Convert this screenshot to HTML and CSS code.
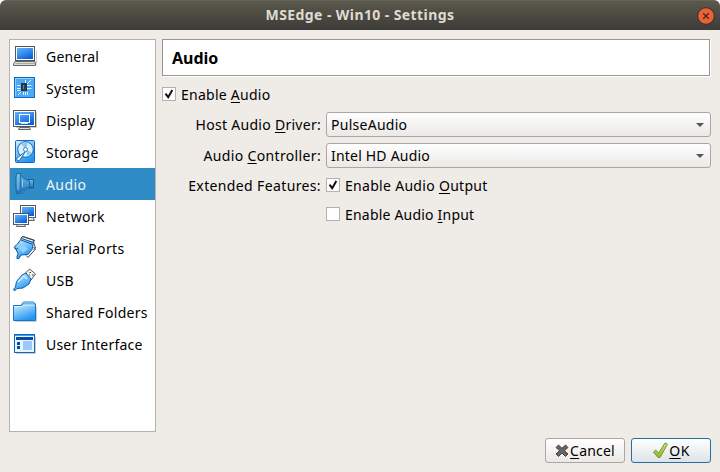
FILE: index.html
```html
<!DOCTYPE html>
<html lang="en">
<head>
<meta charset="utf-8">
<title>MSEdge - Win10 - Settings</title>
<link rel="stylesheet" href="styles.css">
</head>
<body>
<svg class="defs" width="0" height="0" aria-hidden="true">
  <defs>
    <linearGradient id="screen" x1="0" y1="0" x2=".6" y2="1"><stop offset="0" stop-color="#5bb4fb"/><stop offset=".45" stop-color="#3f94f0"/><stop offset="1" stop-color="#0a63dd"/></linearGradient>
    <linearGradient id="pale" x1="0" y1="0" x2=".5" y2="1"><stop offset="0" stop-color="#d5f1ff"/><stop offset="1" stop-color="#2396f2"/></linearGradient>
    <linearGradient id="cone" x1="0" y1="0" x2="0" y2="1"><stop offset="0" stop-color="#75bce8"/><stop offset="1" stop-color="#2174b8"/></linearGradient>
    <linearGradient id="tick" x1="0" y1="0" x2="0" y2="1"><stop offset="0" stop-color="#d2e56b"/><stop offset="1" stop-color="#8cb62b"/></linearGradient>
  </defs>
</svg>
<div class="window">
  <header class="titlebar">
    <span class="title">MSEdge - Win10 - Settings</span>
    <button class="close" aria-label="Close"><svg width="18" height="18"><circle cx="9" cy="9" r="8.3"/><path d="M6.2 6.2l5.6 5.6M11.8 6.2l-5.6 5.6"/></svg></button>
  </header>
  <main class="body">
    <nav class="list">
      <a class="item"><svg class="icon" viewBox="0 0 24 24"><path d="M3 20.5h20.500v-14" fill="none" stroke="#ccc"/><rect x="2.500" y="2.500" width="19" height="14" fill="#fff" stroke="#555"/><rect x="4" y="4" width="16" height="11" fill="url(#screen)"/><path d="M2 17.500h20l.5 2v2H.5v-2z" fill="#deded8" stroke="#666"/><path d="M2 19.500h20" stroke="#aaa"/></svg><span class="w-general">General</span></a>
      <a class="item"><svg class="icon" viewBox="0 0 24 24"><rect x="1.500" y="1.500" width="20" height="20" fill="#4ba9f6" stroke="#1168c4"/><path d="M2.500 20.500v-18h18" fill="none" stroke="#8dcdff"/><path d="M4 9.500h3.500M4 12.500h3.500M4 14.500h3.500M14 9.500h4.500M14 12.500h4.500M12.500 4v3M5 19l3-3M14 8l4-4M10.500 16v3M12.500 16v3M14.500 16v3" stroke="#e2f5ff" fill="none"/><rect x="8.500" y="7.500" width="5" height="7" fill="#333c42" stroke="#18394f"/><path d="M10.500 9v4" stroke="#777"/></svg><span class="w-system">System</span></a>
      <a class="item"><svg class="icon" viewBox="0 0 24 24"><path d="M3 19.500h20.500v-15" fill="none" stroke="#ccc"/><rect x=".5" y="2.500" width="22" height="16" fill="#fff" stroke="#555"/><rect x="2" y="4" width="19" height="13" fill="url(#screen)"/><rect x="6.500" y="6.500" width="10" height="8" fill="none" stroke="#fff"/><path d="M8 15.500h7" stroke="#cbe5ff"/><path d="M5.500 21.500l1-2h10l1 2z" fill="#ddd" stroke="#666"/></svg><span class="w-general">Display</span></a>
      <a class="item"><svg class="icon" viewBox="0 0 24 24"><rect x="2.500" y=".5" width="19" height="22" rx="1" fill="url(#pale)" stroke="#1168c4"/><circle cx="12.500" cy="9.500" r="7.800" fill="#d8eefb" stroke="#0d60b5"/><path d="M12.500 9.500L8 3.500a7 7 0 0 1 7-1z M12.500 9.500l6 3a7 7 0 0 1-4 3.500z" fill="#8ec8ee"/><circle cx="12.500" cy="9.500" r="2" fill="#fff" stroke="#3382c4"/><path d="M12 12L6.500 20.500c-2 .8-3.500-.7-2.500-2.500z" fill="#fff" stroke="#1168b8"/></svg><span class="w-general">Storage</span></a>
      <a class="item selected"><svg class="icon" viewBox="0 0 24 24"><path d="M9 21.500l4-3.500 4-1.500h4.500" stroke="#2875ac" fill="none"/><path d="M15 7.500h5.500v8H15z" fill="url(#cone)" stroke="#145e9e"/><path d="M3.500 1.500h4c.4 3 3 5.500 9 7.500v6c-6 1.500-8.600 3.500-9 6.500h-4c-1-6-1-14 0-20z" fill="url(#cone)" stroke="#1769ac"/><path d="M7.500 2v19" stroke="#2475b6"/><path d="M5 3v15M9.500 8v7" stroke="#8bc7ea" fill="none"/></svg><span class="w-audio">Audio</span></a>
      <a class="item"><svg class="icon" viewBox="0 0 24 24"><rect x="7.500" y="1.500" width="15" height="12" fill="#fff" stroke="#555"/><rect x="9" y="3" width="12" height="9" fill="url(#screen)"/><path d="M14 16.500h7.500l-1.500-3" fill="#ddd" stroke="#666"/><rect x=".5" y="9.500" width="15" height="11" fill="#fff" stroke="#555"/><rect x="2" y="11" width="12" height="8" fill="url(#screen)"/><path d="M3.500 22.500l1-2h7l1 2z" fill="#ddd" stroke="#666"/></svg><span class="w-system">Network</span></a>
      <a class="item"><svg class="icon" viewBox="0 0 24 24"><path d="M8 2l2-1.500 11 3.500-.5 2 2 6-2 1.500" fill="#eee" stroke="#555"/><path d="M1.500 10.500l3-2.500 4-5.500 12 4-1.500 7-4 5-7 .5-2 3.500h-2v-2l1-3z" fill="url(#pale)" stroke="#0b5aa7"/><path d="M7.500 2.500l2-2 12 4-1.500 2M1 11.500l2 2 2-1.500M13 19.500l2 2 7.500-8.500-2-2" stroke="#444" fill="none"/><path d="M8 4l11 4" stroke="#0b5aa7" fill="none"/><path d="M6 12l4-4 5 5-5 4z" fill="#8bd2ff"/></svg><span class="w-serial">Serial Ports</span></a>
      <a class="item"><svg class="icon" viewBox="0 0 24 24"><path d="M12 5.500l4.500-4.500 6 5-4.500 6z" fill="#f4f4f4" stroke="#555"/><path d="M16.500 4.500h1.500M19 7h1.500M16 7h1" stroke="#333"/><path d="M3.500 13.500L9 7l4-2 5 6-2 5-6 4-6 .5L1.500 23l-1-1.500 2-2.500z" fill="url(#pale)" stroke="#0c5fab"/><path d="M5 14l6-6 3 3" stroke="#c8eeff" fill="none" stroke-width="1.500"/></svg><span class="w-usb">USB</span></a>
      <a class="item"><svg class="icon" viewBox="0 0 24 24"><path d="M8.500 4.500l2-2.500h10l2 2.500v15H8.500z" fill="#d9f2ff" stroke="#1682d3"/><path d="M.5 5.500h8l2-1.500h12v16.500H.5z" fill="url(#pale)" stroke="#1477cb"/><path d="M1.500 6.500h7l2-1.500h11" stroke="#e0f6ff" fill="none"/><path d="M2 21.500h21.500V7" stroke="#ccc" fill="none"/></svg><span class="w-shared">Shared Folders</span></a>
      <a class="item"><svg class="icon" viewBox="0 0 24 24"><path d="M3 21.500h19.500v-17" fill="none" stroke="#ccc"/><rect x="1.500" y="2.500" width="20" height="18" fill="#e8f4ff" stroke="#1168c4"/><path d="M2 3.500h19" stroke="#3f9bec"/><path d="M3 5h17v3H3zM4 10h3v3H4zM4 14h3v3H4z" fill="#034ba4"/><path d="M10 9h9v9h-9z" fill="#9bc9ff"/></svg><span class="w-general">User Interface</span></a>
    </nav>
    <section class="page">
      <h1 class="heading"><span>Audio</span></h1>
      <label class="check enable"><span class="box"><svg viewBox="0 0 14 14"><path d="M3.500 6.700l2.700 3.500L10.300 3"/></svg></span><span class="w-enable">Enable <u>A</u>udio</span></label>
      <div class="form">
        <span class="label"><span class="w-host">Host Audio <u>D</u>river:</span></span>
        <div class="select"><span class="w-pulse">PulseAudio</span><i class="arrow"></i></div>
        <span class="label"><span class="w-controller">Audio <u>C</u>ontroller:</span></span>
        <div class="select"><span class="w-intel">Intel HD Audio</span><i class="arrow"></i></div>
        <span class="label lower"><span class="w-extended">Extended Features:</span></span>
        <label class="check"><span class="box"><svg viewBox="0 0 14 14"><path d="M3.500 6.700l2.700 3.500L10.300 3"/></svg></span><span class="w-output">Enable Audio <u>O</u>utput</span></label>
        <label class="check last"><span class="box"></span><span class="w-input">Enable Audio <u>I</u>nput</span></label>
      </div>
    </section>
  </main>
  <footer class="actions">
    <button class="button"><svg width="14" height="14"><path d="M1 3.500L3.500 1 7 4.300 10.500 1 13 3.500 9.500 6.500 13 10l-2.500 2.500L7 9l-3.500 3.500L1 10l3.500-3.500z" fill="#666" stroke="#444"/></svg><span class="w-cancel"><u>C</u>ancel</span></button>
    <button class="button default"><svg width="17" height="17"><path d="M1.500 10l2.200-2 3 3.200L13 1l2.500 1.200L8 15.500H6z" fill="url(#tick)" stroke="#739728"/></svg><span class="w-ok"><u>O</u>K</span></button>
  </footer>
</div>
</body>
</html>
```
FILE: styles.css
```css
* { box-sizing: border-box; }
body { margin: 0; background: #fff; font: 14px/20px "Noto Sans", sans-serif; color: #000; }
.defs { display: block; }
.window { width: 720px; height: 472px; background: #efebe7; border-radius: 6px 6px 0 0; overflow: hidden; display: flex; flex-direction: column; }
.titlebar { height: 30px; flex: none; display: grid; grid-template-columns: 1fr auto 1fr; align-items: center; background: linear-gradient(#5b584c, #3c3b37); border-top: 1px solid #66635a; color: #dfdbd2; }
.title { grid-column: 2; font-weight: 700; font-size: 14px; letter-spacing: .41px; line-height: 20px; padding-bottom: 2px; }
.close { justify-self: end; width: 18px; height: 18px; padding: 0; margin-right: 5px; border: 0; background: none; }
.close svg { display: block; }
.close circle { fill: #ee6036; stroke: #35332e; }
.close path { stroke: #4b2c20; stroke-width: 1.4; }
.body { flex: 1; display: flex; gap: 6px; padding: 9px 9px 0; }
.list { width: 147px; height: 393px; background: #fff; border: 1px solid #b5b1ae; }
.item { height: 32px; display: flex; align-items: center; padding-left: 3px; gap: 9px; white-space: nowrap; }
.item span { padding-top: 2px; }
.selected { background: #308cc6; color: #f1f5f8; }
.icon { width: 24px; height: 24px; flex: none; }
.page { flex: 1; }
.heading { margin: 0; height: 37px; display: flex; align-items: center; padding-left: 9px; background: #fff; border: 1px solid #999692; box-shadow: 1px 1px #fff; font-size: 16px; line-height: 22px; width: 548px; }
.check { display: flex; align-items: center; gap: 5px; height: 20px; white-space: nowrap; }
.check > span:last-child:not(.box) { padding-top: 2px; }
.enable { margin-top: 8px; }
.box { width: 14px; height: 14px; border: 1px solid #b5b1ad; background: #fff; display: block; }
.box svg { display: block; width: 14px; height: 14px; margin: -1px; }
.box path { fill: none; stroke: #111; stroke-width: 2; }
.form { display: grid; grid-template-columns: 159px 385px; column-gap: 5px; grid-template-rows: 25px 25px 20px 20px; margin-top: 8px; width: 549px; row-gap: 6px; }
.form .check { margin-top: 1px; }
.form .last { grid-column: 2; margin-top: 4px; }
.label { text-align: right; align-self: center; white-space: nowrap; }
.lower { padding-top: 4px; }
.select { height: 25px; display: flex; align-items: center; justify-content: space-between; padding: 0 6px 0 4px; border: 1px solid #aaa6a3; border-radius: 3px; background: linear-gradient(#fff, #ebe8e5); }
.arrow { border: 4px solid transparent; border-top-color: #555; border-bottom: 0; }
.actions { height: 34px; flex: none; display: flex; justify-content: flex-end; gap: 6px; padding-right: 9px; }
.button { width: 80px; height: 25px; padding: 0; display: flex; align-items: center; justify-content: center; gap: 1px; border: 1px solid #aaa6a3; border-radius: 3px; background: linear-gradient(#fff, #ebe8e5); font: inherit; color: #000; }
.default { border-color: #256e9e; background: linear-gradient(#fff, #dce3e7); gap: 0; }
.w-general { letter-spacing: .2px; }
.w-system { letter-spacing: .36px; }
.w-audio { letter-spacing: .4px; }
.w-serial { letter-spacing: .32px; }
.w-usb { letter-spacing: .3px; }
.w-shared { letter-spacing: .25px; }
.w-enable { letter-spacing: .25px; }
.w-host { letter-spacing: .28px; }
.w-controller { letter-spacing: .35px; }
.w-extended { letter-spacing: .37px; }
.w-pulse { letter-spacing: .27px; }
.w-intel { letter-spacing: .2px; }
.w-output { letter-spacing: .3px; }
.w-input { letter-spacing: .2px; }
.w-cancel { letter-spacing: .2px; }
.w-ok { letter-spacing: .4px; }
u { text-decoration: underline 1px; text-underline-offset: 2px; text-decoration-skip-ink: none; }
```
